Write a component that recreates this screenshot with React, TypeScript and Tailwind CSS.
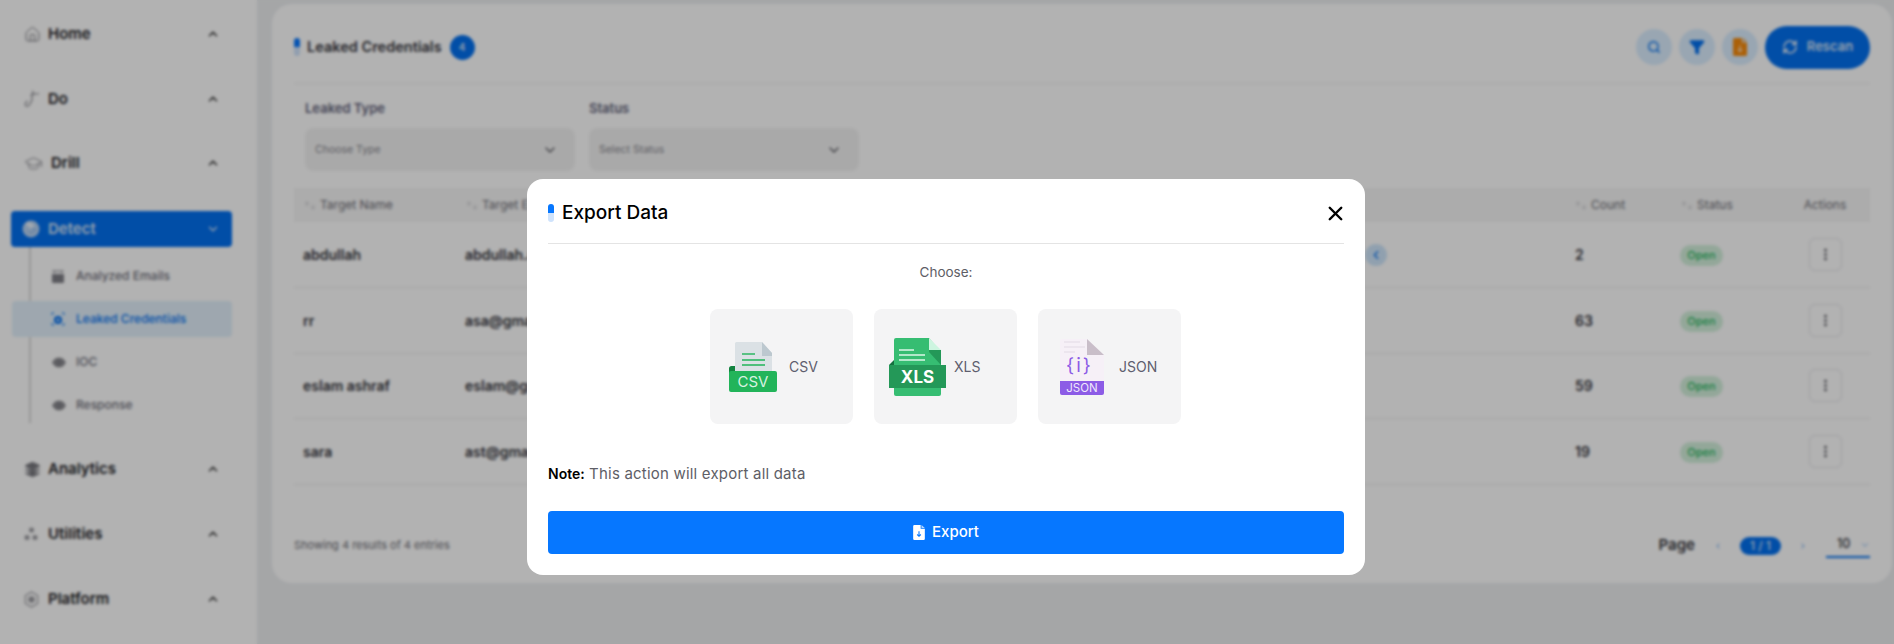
import React from "react";
import { ChevronUp, ChevronDown, ChevronLeft, ChevronRight, House, GraduationCap, Search, Filter, RefreshCw, EllipsisVertical, X, ArrowUp, ArrowDown, Layers, Eye } from "lucide-react";

const F = { fontFamily: '"Inter", "Liberation Sans", sans-serif' };

function FileDown({ className, fill, arrow }: { className?: string; fill: string; arrow: string }) {
  return (
    <svg viewBox="0 0 14 18" className={className}>
      <path d="M1.5 0H9v4.5h5V16.5A1.5 1.5 0 0 1 12.5 18h-11A1.5 1.5 0 0 1 0 16.5V1.5A1.5 1.5 0 0 1 1.5 0Z" fill={fill} />
      <path d="M10 0l4 3.5h-4Z" fill={fill} opacity="0.7" />
      <path d="M7 7.5v6M4.8 11.4 7 13.6l2.2-2.2" stroke={arrow} strokeWidth="1.3" fill="none" />
    </svg>
  );
}

function Nav({ label, icon, className, textClass }: { label: string; icon: React.ReactNode; className: string; textClass?: string }) {
  return (
    <div className={`flex h-9 items-center pl-[24px] pr-[12px] ${className}`}>
      <span className="flex w-[24px] shrink-0 items-center">{icon}</span>
      <span className={`text-[15px] font-semibold text-[#222226] ${textClass ?? ""}`}>{label}</span>
      <ChevronUp className="ml-auto h-[14px] w-[14px] text-[#333]" strokeWidth={2.6} />
    </div>
  );
}

function Sub({ label, icon }: { label: string; icon: React.ReactNode }) {
  return (
    <div className="flex h-9 items-center pl-[20px]">
      <span className="flex w-[25px] items-center justify-start">{icon}</span>
      <span className="text-[12px] font-medium text-[#6f6f7a]">{label}</span>
    </div>
  );
}

function Sidebar() {
  const eye = <Eye className="h-[15px] w-[16px] text-[#77777d]" fill="#8c8c92" strokeWidth={1.5} />;
  return (
    <aside className="h-full w-[257px] shrink-0 bg-white pr-[25px] pt-[16px]">
      <Nav label="Home" icon={<House className="h-[17px] w-[17px] text-[#77777d]" strokeWidth={1.4} />} className="mb-[29px]" />
      <Nav label="Do" icon={
        <svg viewBox="0 0 16 18" className="h-[18px] w-[16px]" fill="none" stroke="#85858b" strokeWidth="1.1">
          <path d="M8 1c2 1 1.500 3-.5 3.600L7 5c3-.8 7-1.600 8-1M7 5c1.500 1.500 1.300 5-.6 8.200C5.300 15.500 2.500 17.500 1.500 15.500.8 14 2 12 3.500 11" />
        </svg>
      } className="mb-[28px]" />
      <Nav label="Drill" icon={<GraduationCap className="h-[19px] w-[19px] text-[#85858b]" strokeWidth={1.2} />} textClass="ml-[3px]" className="mb-[30px]" />
      <div className="ml-[11px] flex h-9 items-center rounded-[4px] bg-[#0270f0] pl-[11px] pr-[12px]">
        <svg viewBox="0 0 18 18" className="mr-[8px] h-[18px] w-[18px]">
          <circle cx="9" cy="9" r="8.500" fill="#b9d4f3" />
          <path d="M3 3.500 9 9a3 3 0 0 0 3-3A6 6 0 0 0 3 3.500Z" fill="#e9f2fc" />
          <path d="M9 9a4.500 4.500 0 0 1 4.500 0 4.500 4.500 0 0 1-8 2" fill="none" stroke="#7eaee6" strokeWidth="1" />
        </svg>
        <span className="text-[15px] font-semibold text-[#d9e7f8]">Detect</span>
        <ChevronDown className="ml-auto h-[14px] w-[14px] text-[#d9e7f8]" strokeWidth={2.2} />
      </div>
      <div className="ml-[29px] flex flex-col gap-[7px] border-l-2 border-[#d8d8d8] pt-[11px]">
        <Sub label="Analyzed Emails" icon={
          <svg viewBox="0 0 14 14" className="h-[14px] w-[14px]">
            <path d="M1 5h12v8a1 1 0 0 1-1 1H2a1 1 0 0 1-1-1Z" fill="#7f7f86" />
            <path d="M3 4V2h8v2M1.500 1l2 2M12.500 1l-2 2" stroke="#7f7f86" strokeWidth="1" fill="none" />
          </svg>
        } />
        <div className="-ml-[19px] flex h-9 items-center rounded-[4px] bg-[#e2f0fb] pl-[39px]">
          <svg viewBox="0 0 14 14" className="mr-[11px] h-[14px] w-[14px]">
            <circle cx="7" cy="8" r="4" fill="#0270f0" />
            <circle cx="7" cy="8" r="1.500" fill="#e2f0fb" />
            <path d="M1 3V1h2M13 3V1h-2M1 11v2h2M13 11v2h-2" stroke="#0270f0" strokeWidth="1" fill="none" />
          </svg>
          <span className="text-[12px] font-medium text-[#0270f0]">Leaked Credentials</span>
        </div>
        <Sub label="IOC" icon={eye} />
        <Sub label="Response" icon={eye} />
      </div>
      <div className="mt-[28px]">
        <Nav label="Analytics" icon={<Layers className="h-[17px] w-[17px] text-[#77777d]" fill="#77777d" strokeWidth={1.4} />} className="mb-[29px]" />
        <Nav label="Utilities" icon={
          <svg viewBox="0 0 14 14" className="h-[14px] w-[14px]" fill="#9b9ba0"><circle cx="7.500" cy="3" r="2.500" /><circle cx="3" cy="10.500" r="2.500" /><circle cx="11" cy="10.500" r="2.500" /></svg>
        } className="mb-[29px]" />
        <Nav label="Platform" icon={
          <svg viewBox="0 0 16 18" className="h-[17px] w-[15px]" fill="none" stroke="#9b9ba0" strokeWidth="1.300"><path d="M8 1l6.500 3.800v8.400L8 17l-6.500-3.800V4.800Z" /><circle cx="8" cy="9" r="2.800" fill="#9b9ba0" /></svg>
        } className="" />
      </div>
    </aside>
  );
}

function SortIcon() {
  return (
    <span className="mr-[4px] inline-flex items-center align-middle text-[#a3a3aa]">
      <ArrowUp className="-mt-[4px] h-[8px] w-[6px]" strokeWidth={2} />
      <ArrowDown className="mt-[3px] h-[8px] w-[6px]" strokeWidth={2} />
    </span>
  );
}

const rows = [
  { name: "abdullah", email: "abdullah.ali@gmail.com", count: 2, pill: true },
  { name: "rr", email: "asa@gmail.com", count: 63, pill: false },
  { name: "eslam ashraf", email: "eslam@gmail.com", count: 59, pill: false },
  { name: "sara", email: "ast@gmail.com", count: 19, pill: false },
];

function Table() {
  return (
    <table className="w-full table-fixed border-collapse">
      <colgroup>
        <col className="w-[163px]" />
        <col className="w-[400px]" />
        <col />
        <col className="w-[105px]" />
        <col className="w-[109px]" />
        <col className="w-[90px]" />
      </colgroup>
      <thead>
        <tr className="h-[34px] bg-[#f6f6f6] text-left text-[12px] font-normal text-[#6c6c74]">
          <th className="pl-[10px] font-normal"><SortIcon />Target Name</th>
          <th className="pl-[9px] font-normal"><SortIcon />Target Email</th>
          <th className="font-normal"></th>
          <th className="pl-[9px] font-normal"><SortIcon />Count</th>
          <th className="pl-[10px] font-normal"><SortIcon />Status</th>
          <th className="text-center font-normal">Actions</th>
        </tr>
      </thead>
      <tbody>
        {rows.map((r) => (
          <tr key={r.name} className="h-[65.500px] border-b border-[#ececec] text-[14px] font-semibold text-[#35353c]">
            <td className="pl-[9px]">{r.name}</td>
            <td className="pl-[8px]">{r.email}</td>
            <td className="pr-[179px]">
              {r.pill && (
                <span className="ml-auto flex h-[22px] w-[22px] items-center justify-center rounded-full bg-[#cfe6fb]">
                  <ChevronLeft className="h-[14px] w-[14px] text-[#0270f0]" strokeWidth={2} />
                </span>
              )}
            </td>
            <td className="pl-[9px]">{r.count}</td>
            <td className="pl-[9px]">
              <span className="inline-flex h-[21px] w-[43px] items-center justify-center rounded-full bg-[#d3f0dc] text-[11px] font-medium text-[#22b45a]">Open</span>
            </td>
            <td>
              <span className="mx-auto flex h-[33px] w-[33px] items-center justify-center rounded-[6px] border border-[#e2e2e6] bg-white">
                <EllipsisVertical className="h-[15px] w-[15px] text-[#55555c]" strokeWidth={2.4} />
              </span>
            </td>
          </tr>
        ))}
      </tbody>
    </table>
  );
}

function Field({ label, placeholder }: { label: string; placeholder: string }) {
  return (
    <div className="w-[270px]">
      <div className="mb-[10px] text-[13px] font-semibold leading-[20px] text-[#62627a]">{label}</div>
      <div className="flex h-[43px] items-center justify-between rounded-[8px] bg-[#f3f3f3] pl-[10px] pr-[17px]">
        <span className="text-[10.500px] text-[#85858d]">{placeholder}</span>
        <ChevronDown className="h-[16px] w-[16px] text-[#55555c]" strokeWidth={2} />
      </div>
    </div>
  );
}

function Marker() {
  return <span className="flex h-[18px] w-[6px] flex-col overflow-hidden rounded-full"><span className="h-[9px] bg-[#0677ff]" /><span className="h-[9px] bg-[#cfe3fc]" /></span>;
}

function RoundBtn({ children }: { children: React.ReactNode }) {
  return <span className="flex h-9 w-9 items-center justify-center rounded-full bg-[#dbeeff]">{children}</span>;
}

function Main() {
  return (
    <main className="min-w-0 flex-1 pl-[15px] pr-[2px] pt-[4px]">
      <section className="h-[579px] rounded-[20px] bg-white px-[22px]">
        <header className="flex h-[80px] items-center border-b border-[#eeeeee] pt-[7px]">
          <Marker />
          <h2 className="ml-[7px] text-[14.500px] font-semibold text-[#35353c]">Leaked Credentials</h2>
          <span className="ml-[8px] flex h-[25px] w-[25px] items-center justify-center rounded-full bg-[#0270f0] text-[10px] font-semibold text-[#d9e7f8]">4</span>
          <div className="ml-auto flex items-center gap-[7px]">
            <RoundBtn><Search className="h-[14px] w-[14px] text-[#0270f0]" strokeWidth={2.4} /></RoundBtn>
            <RoundBtn><Filter className="h-[16px] w-[16px] text-[#0270f0]" fill="#0270f0" /></RoundBtn>
            <RoundBtn><FileDown className="h-[18px] w-[14px]" fill="#f58a0c" arrow="#fbe2c2" /></RoundBtn>
            <span className="flex h-[43px] w-[105px] items-center justify-center gap-[9px] rounded-full bg-[#0270f0]">
              <RefreshCw className="h-[16px] w-[16px] text-[#e6f0fb]" strokeWidth={2.4} />
              <span className="text-[13px] font-semibold text-[#d9e7f8]">Rescan</span>
            </span>
          </div>
        </header>
        <div className="flex gap-[14px] pl-[11px] pt-[14px]">
          <Field label="Leaked Type" placeholder="Choose Type" />
          <Field label="Status" placeholder="Select Status" />
        </div>
        <div className="pt-[17px]"><Table /></div>
        <footer className="mt-[49px] flex items-center justify-between">
          <span className="text-[11px] text-[#6c6c74]">Showing 4 results of 4 entries</span>
          <div className="flex items-center">
            <span className="text-[15px] font-semibold text-[#35353c]">Page</span>
            <ChevronLeft className="ml-[19px] h-[8px] w-[8px] text-[#5f9ff0]" strokeWidth={3} />
            <span className="ml-[18px] flex h-[18px] w-[41px] items-center justify-center rounded-full bg-[#0270f0] text-[12px] font-medium text-[#d9e7f8]">1 / 1</span>
            <ChevronRight className="ml-[18px] h-[8px] w-[8px] text-[#5f9ff0]" strokeWidth={3} />
            <span className="ml-[19px] flex h-[24px] w-[44px] items-center justify-between border-b-2 border-[#0270f0] pl-[11px]">
              <span className="text-[12.500px] font-medium text-[#35353c]">10</span>
              <ChevronDown className="h-[10px] w-[10px] text-[#7fb4f5]" strokeWidth={2.4} />
            </span>
          </div>
        </footer>
      </section>
    </main>
  );
}

function CsvIcon() {
  return (
    <svg viewBox="0 0 48 50" className="h-[50px] w-[48px]">
      <path d="M6 1.500A1.500 1.500 0 0 1 7.500 0H33l10 11v20H6Z" fill="#dbe1e5" />
      <path d="M33 0l10 11v3H33Z" fill="#bcc8cf" />
      <path d="M13 12h13" stroke="#22b45a" strokeWidth="1.400" />
      <path d="M13 18h23M13 23h23" stroke="#22b45a" strokeWidth="1.400" />
      <path d="M0 26.500A2.500 2.500 0 0 1 2.500 24H6v7H0Z" fill="#12833f" />
      <rect y="29" width="48" height="21" rx="2" fill="#22b45a" />
      <text x="24" y="44.700" textAnchor="middle" fontSize="15" fontFamily="Inter, sans-serif" fill="#d7f2e0">CSV</text>
    </svg>
  );
}

function XlsIcon() {
  return (
    <svg viewBox="0 0 57 58" className="h-[58px] w-[57px]">
      <path d="M5 2a2 2 0 0 1 2-2h33l12 14v42a2 2 0 0 1-2 2H7a2 2 0 0 1-2-2Z" fill="#36bd72" />
      <path d="M40 0l12 12v2H40Z" fill="#cdf5e0" />
      <path d="M40 12h12v15H52L40 14Z" fill="#249858" />
      <path d="M10 12h15M10 17h26M10 22h26" stroke="#dcf6e7" strokeWidth="1.500" />
      <path d="M0 27 5 22v5Z" fill="#15703f" />
      <rect y="27" width="57" height="23" fill="#249858" />
      <text x="28.500" y="45" textAnchor="middle" fontSize="17" fontWeight="700" fontFamily="Inter, sans-serif" fill="#ffffff">XLS</text>
    </svg>
  );
}

function JsonIcon() {
  return (
    <svg viewBox="0 0 44 56" className="h-[56px] w-[44px]">
      <path d="M2 0h25l17 16v26H0V2a2 2 0 0 1 2-2Z" fill="#f6f0f7" />
      <path d="M27 0l17 16H27Z" fill="#c9bec9" />
      <path d="M4 3h16M4 8h21M4 13h11" stroke="#e2d9e6" strokeWidth="1.200" />
      <text x="19.500" y="33" textAnchor="middle" fontSize="19" letterSpacing="2" fontFamily="Inter, sans-serif" fill="#8c5ce6">{"{i}"}</text>
      <path d="M0 42h44v12a2 2 0 0 1-2 2H2a2 2 0 0 1-2-2Z" fill="#8c5ce6" />
      <text x="22" y="52.700" textAnchor="middle" fontSize="11.500" fontFamily="Inter, sans-serif" fill="#efe8fc">JSON</text>
    </svg>
  );
}

function FormatCard({ icon, label, pad, gap }: { icon: React.ReactNode; label: string; pad: string; gap: string }) {
  return (
    <div className={`flex h-[115px] w-[143px] items-center rounded-[8px] bg-[#f4f4f5] ${pad} ${gap}`}>
      {icon}
      <span className="text-[14px] text-[#5e5e6e]">{label}</span>
    </div>
  );
}

function Modal() {
  return (
    <div className="absolute inset-0 flex items-start justify-center bg-black/30 pr-[2px] pt-[179px] backdrop-blur-[1.5px]">
      <div className="h-[396px] w-[838px] rounded-[16px] bg-white px-[21px]">
        <div className="flex h-[65px] items-center border-b border-[#e4e4e4] pt-[4px]">
          <Marker />
          <h3 className="ml-[8px] text-[19px] font-medium text-black">Export Data</h3>
          <X className="ml-auto -mr-[3px] h-[23px] w-[23px] text-black" strokeWidth={2.500} />
        </div>
        <p className="mt-[19px] text-center text-[13.500px] leading-[18px] text-[#5e5e66]">Choose:</p>
        <div className="mt-[28px] flex justify-center gap-[21px] pr-[1px]">
          <FormatCard icon={<CsvIcon />} label="CSV" pad="pl-[19px]" gap="gap-[12px]" />
          <FormatCard icon={<XlsIcon />} label="XLS" pad="pl-[15px]" gap="gap-[8px]" />
          <FormatCard icon={<JsonIcon />} label="JSON" pad="pl-[22px]" gap="gap-[15px]" />
        </div>
        <p className="mt-[41px] text-[15px] leading-[18px] tracking-[0.2px] text-[#5e5e66]"><b className="text-[14px] font-semibold tracking-normal text-black">Note:</b> This action will export all data</p>
        <button className="mt-[28px] flex h-[43px] w-full items-center justify-center gap-[7px] rounded-[4px] bg-[#0677ff] text-[15px] font-medium text-white">
          <FileDown className="h-[15px] w-[12px]" fill="#ffffff" arrow="#0677ff" />
          Export
        </button>
      </div>
    </div>
  );
}

export default function App() {
  return (
    <div className="relative flex h-[644px] w-full overflow-hidden bg-[#eceef0]" style={F}>
      <Sidebar />
      <Main />
      <Modal />
    </div>
  );
}
